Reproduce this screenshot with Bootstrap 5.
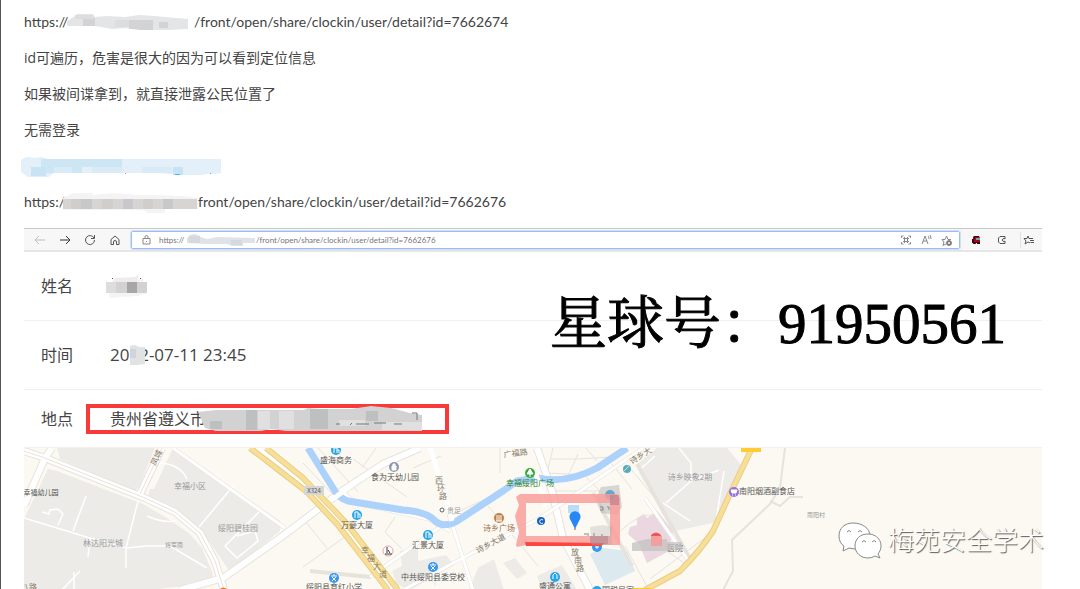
<!DOCTYPE html>
<html lang="zh-CN">
<head>
<meta charset="utf-8">
<meta name="viewport" content="width=device-width, initial-scale=1">
<title>clockin detail</title>
<link href="https://cdn.jsdelivr.net/npm/bootstrap@5.3.0/dist/css/bootstrap.min.css" rel="stylesheet">
<style>
body{font-family:"Open Sans","Noto Sans CJK SC",sans-serif;font-size:14px;line-height:20px;color:#444;background:#fff;overflow-x:hidden}
.page{border-left:1px solid #555;padding:12px 38px 0 23px;height:100vh;overflow:hidden}
.notes{gap:16px;padding-bottom:16px}
.notes p{height:20px;white-space:nowrap}
.url{font-family:Lato,"Open Sans",sans-serif}
.smudge{flex:none;overflow:visible;display:block}
.prefix{width:43px}
.prefix-short{width:39px}
.toolbar{height:24px;background:#f7f7f7;border-top:1px solid #c8c8c8;border-bottom:2px solid #e6e6e9;padding:2px 6px 1px 8px}
.toolset{gap:9px}
.tool{border:0;background:none;padding:0;width:16px;height:16px;display:flex;align-items:center;justify-content:center}
.tool svg,.lock{fill:none;stroke:#555;stroke-width:1;flex:none}
.address{border:1px solid #9dbdf0;outline:1px solid #cfdff8;border-radius:2px;background:#fff;height:18px;padding:0 5px 0 10px;font:8px/16px Lato,"Open Sans",sans-serif;color:#777}
.address input{border:0;padding:0;font:inherit;color:inherit;min-width:0;outline:0;background:none}
.address .tool svg,.lock{stroke:#888}
.scheme{width:28px}
.field{height:69px;border-bottom:1px solid #f0f0f0;padding-left:17px;font-size:16px;line-height:24px}
.field dt{width:69px;font-weight:400;flex:none}
.stamp{font-size:17px}
.place{height:58px}
.place dt{width:45px}
.marked{border:4px solid #f93a3a;width:363px;height:30px;padding-left:20px;line-height:22px;white-space:nowrap}
.planet{right:36px;top:40px;font:57px/64px "Liberation Serif","Noto Serif CJK SC","Noto Sans CJK SC",serif;color:#000;-webkit-text-stroke:1px #000;white-space:nowrap}
.map svg.plan{display:block;width:100%;height:auto}
.plan text{font-family:"Noto Sans CJK SC",sans-serif;font-size:8px;fill:#555;text-anchor:middle}
.plan .pale{fill:#999}
.plan .road{fill:#887a68}
.plan .steps{text-anchor:start}
.plan .tiny{font-size:6px}
.plan .small-label{font-size:7px}
.casing{stroke:#e6e3dd;fill:none}
.lane{stroke:#fff;fill:none}
.watermark{right:-2px;top:71px;gap:6px;font:300 26px/40px "Noto Sans CJK SC",sans-serif;color:#fff;text-shadow:1px 1px 1px #555;white-space:nowrap}
</style>
</head>
<body>
<main class="page">
<section class="notes d-flex flex-column">
<p class="m-0 d-flex url"><span class="prefix">https://</span>
<svg class="smudge" width="127" height="20"><path d="M0 9L8 4 10 2 26 2 28 5 40 4 58 5 72 3 88 4 98 5 121 7 121 17 102 18 70 18 60 16 45 17 28 14 0 14Z" fill="#e4e5e7"/><path d="M16 6h12v8H16zM62 8h10v9H62zM72 8h14v10H72zM92 10h9v6h-9z" fill="#d3d3d6"/><path d="M8 3h18v4H8zM48 8h14v7H48z" fill="#dddddf"/></svg>
<span>/front/open/share/clockin/user/detail?id=7662674</span></p>
<p class="m-0">id可遍历，危害是很大的因为可以看到定位信息</p>
<p class="m-0">如果被间谍拿到，就直接泄露公民位置了</p>
<p class="m-0">无需登录</p>
<p class="m-0"><svg class="smudge" width="200" height="20"><path d="M-3 4Q2-1 10 2L18 1 24 3H197V17L190 18H182L178 19H156L134 17H30L24 21H4L-3 16Z" fill="#e3f0f9"/><path d="M17 3H98V11H58V17H17Z" fill="#cde6f4"/><path d="M7 11H22V20H7zM149 11h10v8h-10z" fill="#c8e3f3"/><path d="M30 11h18v6H30zM68 11h30v6H68zM118 11h30v6h-30z" fill="#d9ebf6"/><path d="M151 18h5v1h-5zM101 17h1v1h-1zM186 17h1v1h-1z" fill="#56afe0"/></svg></p>
<p class="m-0 d-flex url"><span class="prefix-short">https:/</span>
<svg class="smudge" width="135" height="20"><path d="M0 6L10 1H30V3L50 1 75 3 90 3 120 4 135 6V17H102V21H85L80 18 58 18H0Z" fill="#f4f4f4"/><path d="M0 7H134V17H0Z" fill="#d6d5d4"/><path d="M18 7h11v10H18zM60 7h10v10H60zM100 7h10v10h-10z" fill="#c8c8cb"/><path d="M8 7h10v10H8zM39 7h11v10H39zM80 7h10v10H80z" fill="#d1cdcb"/></svg>
<span>front/open/share/clockin/user/detail?id=7662676</span></p>
</section>

<section class="browser">
<div class="toolbar d-flex align-items-center">
<div class="toolset d-flex">
<button class="tool" aria-label="Back"><svg width="12" height="12" opacity=".35"><path d="M11 6H1M5 2L1 6l4 4"/></svg></button>
<button class="tool" aria-label="Forward"><svg width="12" height="12"><path d="M1 6h10M7 2l4 4-4 4" stroke="#333"/></svg></button>
<button class="tool" aria-label="Refresh"><svg width="12" height="12"><path d="M10 4A4.500 4.500 0 1 0 10.500 6M10.500 1v3.500H7"/></svg></button>
<button class="tool" aria-label="Home"><svg width="12" height="12"><path d="M2 5.500L6 2l4 3.500V10.500H7.500V8a1.500 1.500 0 0 0-3 0v2.500H2Z"/></svg></button>
</div>
<div class="address d-flex align-items-center flex-grow-1 mx-2">
<svg class="lock me-2" width="9" height="12"><path d="M1 4.500h7v5.500H1zM3 4.500V3a1.500 1.500 0 0 1 3 0v1.500M4.500 7v1"/></svg>
<span class="scheme">https://</span>
<svg class="smudge" width="69" height="16"><path d="M0 6L3 3Q9 0 14 5L20 7 30 5 68 6V11H56V14H45L40 12H20L0 11Z" fill="#dfe3e8"/><path d="M2 4h11v7H2zM44 8h11v5H44z" fill="#d4d9df"/></svg>
<input class="flex-grow-1" aria-label="Address" value="/front/open/share/clockin/user/detail?id=7662676">
<div class="d-flex gap-1">
<button class="tool" aria-label="Apps"><svg width="10" height="10"><path d="M.5 3V1h2M7.500 1h2v2M.5 7v2h2M7.500 9h2V7M3.500 2v6M6.500 2v6M2 3.500h6M2 6.500h6"/></svg></button>
<button class="tool" aria-label="Read aloud"><svg width="11" height="10"><path d="M1 9L4 1l3 8M2 6h4M7 1q1 1 1 3M9 0q1 2 1 4"/></svg></button>
<button class="tool" aria-label="Favorite"><svg width="11" height="11"><path d="M5 9L2 10.500 3 7 1 4.500h3L5.500 1 7 4.500h3"/><circle cx="8" cy="8" r="2.500" fill="#777"/><path d="M7 8h2M8 7v2" stroke="#fff"/></svg></button>
</div>
</div>
<div class="d-flex align-items-center" style="gap:10px">
<button class="tool" aria-label="Extension"><svg width="10" height="10"><g stroke="none"><path d="M3 1h5l1 2v6H6V8H5v1H2V8H1V4h1V2Z" fill="#b0001c"/><path d="M1 4h2v4H1zM3 1h5v1H4v2H3zM3 7h6v2H6V8H4v1H3z" fill="#260910"/><path d="M5 3h4v2H5z" fill="#70a6ad"/></g></svg></button>
<button class="tool" aria-label="Extensions"><svg width="10" height="10"><path d="M3 1.500h5v2.500a1.500 1.500 0 1 0 0 2v2.500H3L1.500 7V3Z"/></svg></button>
<button class="tool border-start" aria-label="Favorites"><svg width="12" height="10"><path d="M5 1l1 2.500h4M5 1L4 3.500H1L3 6 2 9l3-2 2 1M7 5.500h4M7.500 7.500H11"/></svg></button>
</div>
</div>

<div class="position-relative">
<dl class="m-0">
<div class="field d-flex align-items-center"><dt>姓名</dt><dd class="m-0"><svg class="smudge" width="42" height="24"><path d="M-3 15L18 7 33 5 34 9H37V19L28 22 0 24Z" fill="#f4f4f4"/><path d="M-4 8H37V19H-4Z" fill="#d3d2d2"/><path d="M6 4L25 3 28 1V8H2Z" fill="#eeecec"/><path d="M-4 8H6V19H-4Z" fill="#e0dcda"/><path d="M17 8h10v11H17z" fill="#a8a7a6"/><path d="M2 4h1v1H2zM30 4h1v1h-1z" fill="#555"/></svg></dd></div>
<div class="field d-flex align-items-center"><dt>时间</dt><dd class="m-0 position-relative stamp">2022-07-11 23:45<svg class="smudge position-absolute top-0 start-0" width="40" height="24"><path d="M20 3l5-1 4 2 6 0 0 17-7 1-8 0Z" fill="#e1e2e3"/><path d="M20 6h6v9h-6z" fill="#d2d4d7"/></svg></dd></div>
<div class="field place d-flex align-items-center"><dt>地点</dt><dd class="m-0 marked d-flex">贵州省遵义市<svg class="smudge" width="220" height="22"><path d="M-8 4L10 2H98L102 0 115 1H145L165-2 185 0 204 5 216 7V23H80L65 21 55 23H10L-1 20Z" fill="#d2d2d3"/><path d="M4 13h12v8H4zM40 2h11v20H40zM104 1h18v20h-18zM160 3h12v10h-12z" fill="#bebfc1"/><path d="M52 3h12v18H52zM73 3h15v18H73zM133 12h26v6h-26zM176 14h40v8h-40z" fill="#e0e0e0"/><path d="M130 16h4M146 15l-2 2M150 16h13M168 15h12M188 16h8M206 5h5v7" stroke="#777" fill="none"/></svg></dd></div>
</dl>
<div class="planet position-absolute">星球号：91950561</div>
</div>

<div class="map position-relative">
<svg class="plan" viewBox="24 447 1018 142">
<path fill="#fcf9f2" d="M24 447h1018v142H24z"/>
<g fill="#ecebe7">
<path d="M57 447L60 458 135 490 139 486 155 447ZM48 468L57 470 143 503 167 517 190 533 202 547 213 573 210 582 150 589H24V518ZM173 447L280 520V530L233 568H228L202 530 170 507 148 495 150 488H154Z"/>
<path d="M637 463L657 447H727L742 465 713 522 675 530ZM270 518l10 8-10 9ZM392 570l10-5-2-15 18-4v14l28-6 8 10-42 24-15-4ZM478 567l16-9 10 31h-35ZM537 575l25-11 15 25h-35ZM503 562l12-5 12 15-10 6Z"/>
</g>
<path fill="#dce9ee" d="M590 553l13-6 24 3 8 20-30 14Z"/>
<path fill="#ead7df" d="M637 517l7-4 3 4 10-7 16 20-4 20-22 12-8-19-11-10 2-7 7-2Z"/>
<g class="casing" stroke-width="1">
<path d="M303 462l33 35M318 447l40 44M353 458l54 38M376 447l-14 20M441 455l-28 12M511 486l-64 30M395 516l-10 15 17 17M305 520l22 27M303 566l50-36M435 559v25M488 505l50 60M500 447v25M553 447l-6 25 22 1 9-20M586 447l11 13M550 458h27l35-2M552 490h48l-20-20M612 463l20 25M630 467l25 30M625 545l24 44M620 530q20-18 33-16M667 550l20 14M650 578l60-45"/>
<path d="M785 447l-5 40-10 16-38 36 1 31-10 19M770 500l10 5 10-9h13" stroke-width="2"/>
</g>
<path class="lane" stroke-width="1.500" d="M42 511l7 2 1-4 8-1 5 5-5 11M86 495l-13 35M24 517l66 20-2 19M90 537l37 10 20-2h23l37 22M138 500l-12 47v20M147 515q15 7 28 5M74 589v-18M80 570l-18 19M160 462q20 1 27 16M233 485l-34 41M260 510l-35 35 12 12 21-17-3-10-18 5M679 447l12 15v18l-25 22M691 480l28-11M663 502l27 18M724 470l-8 50M655 455l-20 18"/>
<g stroke-linejoin="round">
<path class="casing" stroke-width="8" d="M24 450L45 457 145 497 175 511 200 532 215 560 224 589M24 505L45 457 52 447M140 493L162 447M180 589L223 577 280 537 342 490 383 463 420 447M537 447L552 490 563 537 590 589"/>
<path class="lane" stroke-width="6" d="M24 450L45 457 145 497 175 511 200 532 215 560 224 589M24 505L45 457 52 447M140 493L162 447M180 589L223 577 280 537 342 490 383 463 420 447M537 447L552 490 563 537 590 589"/>
<path class="casing" stroke-width="1" d="M24 450L45 457 145 497 175 511 200 532 215 560 224 589M140 493L162 447"/>
<path class="casing" stroke-width="4" d="M173 447L285 527M342 490L355 502 428 518 450 530M430 447L447 507 473 589M403 589L457 560 540 517 570 497 643 447M440 526L370 576 310 570M593 492L632 565M645 497L690 562M637 463L690 558"/>
<path class="lane" stroke-width="3" d="M173 447L285 527M342 490L355 502 428 518 450 530M430 447L447 507 473 589M403 589L457 560 540 517 570 497 643 447M440 526L370 576M645 497L690 562"/>
<path d="M308 447L333 487Q338 497 348 500L403 509Q427 511 434 519 443 528 457 520L503 490 517 480 537 477Q567 483 597 467L627 447" fill="none" stroke="#acd2fc" stroke-width="7"/>
<path class="lane" stroke-width="5" d="M428 440L452 520M333 498L357 480M535 470L546 505"/>
</g>
<g fill="none">
<path d="M258 447L307 484 342 523 393 589" stroke="#fff" stroke-width="13"/>
<path d="M250 447L280 470 307 491 337 523 388 589M266 447L303 477 333 508 347 523 398 589M752 447L730 493 713 530Q700 550 680 570L645 589" stroke="#e9cd80" stroke-width="6"/>
<path d="M250 447L280 470 307 491 337 523 388 589M266 447L303 477 333 508 347 523 398 589M752 447L730 493 713 530Q700 550 680 570L645 589" stroke="#f8df99" stroke-width="4"/>
</g>
<path d="M741 447h20v4h-20zM632 587h20v2h-20z" fill="#fc3"/>
<rect x="304" y="485" width="20" height="9" rx="1" fill="#d6d6d6"/>
<text class="tiny" x="314" y="492">X324</text>
<text class="pale" x="190" y="488">幸福小区</text><text class="small-label" x="41" y="494">幸福幼儿园</text>
<text class="pale" x="103" y="545">林达阳光城</text><text class="pale tiny" x="174" y="546">将军南</text><text class="pale" x="238" y="530">绥阳碧桂园</text>
<text class="road" x="159" y="458" transform="rotate(-65 159 458)">凤城</text><text class="road" x="29" y="589">八路</text>
<text x="336" y="462">盛海商务</text><text x="395" y="479">食为天幼儿园</text><text x="357" y="527">万豪大厦</text>
<text class="pale small-label" x="454" y="512">贵足</text><text x="428" y="547">汇景大厦</text><text x="433" y="579">中共绥阳县委党校</text><text x="334" y="589">绥阳县育红小学</text>
<text class="road steps" x="435 437 439" y="482 490 498">西环路</text>
<text class="road steps" x="361 367 373 379" y="552 560 568 576">幸福大道</text>
<text class="road steps" x="571 574 576" y="554 562 570">放南路</text>
<text class="road" x="492" y="545" transform="rotate(-28 492 545)">诗乡大道</text>
<text class="road" x="516" y="455" transform="rotate(-8 516 455)">广福路</text>
<text class="road" x="642" y="457" transform="rotate(-32 642 457)">诗乡大</text>
<text x="530" y="485" style="fill:#27842c">幸福绥阳广场</text><text x="499" y="530" style="fill:#9a7049">诗乡广场</text>
<text x="555" y="588">盛通公寓</text><text x="618" y="592">国税局家</text>
<text class="pale" x="690" y="479">诗乡映象2期</text><text x="767" y="493">南阳烟酒副食店</text><text class="pale tiny" x="816" y="516">南阳村</text>
<text x="675" y="550">医院</text>
<g fill="#27a5e9"><circle cx="336" cy="449" r="5"/><circle cx="357" cy="514" r="5"/><circle cx="428" cy="534" r="5"/><circle cx="555" cy="576" r="5"/><circle cx="610" cy="494" r="5"/><circle cx="597" cy="590" r="5"/></g>
<g fill="#3796ee"><circle cx="433" cy="566" r="5"/><circle cx="334" cy="577" r="5"/><circle cx="597" cy="546" r="5"/></g>
<g stroke="#fff" fill="none"><path d="M334 452v-5h3v5M337 449h2v3M355 517v-6h3v6M358 513h2v4M426 537v-6h3v6M429 533h2v4M553 578v-4l2-2 2 2v4M430 564h6M433 562v2M431 569l4-4M431 565l4 4M331 575h6M334 573v2M332 580l4-4M332 576l4 4M595 546h4M597 544v4"/></g>
<circle cx="394" cy="466" r="5" fill="#8e98b1"/><path d="M392 465h4v4h-4zM393 465v-2h2v2" fill="#fff" stroke="#fff"/>
<circle cx="442" cy="509" r="2" fill="#fff" stroke="#5a6570"/>
<circle cx="499" cy="517" r="5" fill="#bd7f46"/><path d="M496 515h6M497 516v4M499 516v4M501 516v4M496 520h6" stroke="#fff"/>
<circle cx="530" cy="472" r="5" fill="#36ab3b"/><path d="M530 468l3 5h-6zM530 472v4" fill="#fff" stroke="#fff"/>
<circle cx="627" cy="468" r="4" fill="#57acc5"/><path d="M624 470l5-5" stroke="#ebdf80"/>
<circle cx="388" cy="550" r="5" fill="#fff" stroke="#eba6a6"/><path d="M387 546v6M385 553h7M388 549l2 3" stroke="#333" fill="none"/>
<circle cx="734" cy="491" r="5" fill="#9670e7"/><path d="M731 489h6l-1 3h-4zM732 494h1M735 494h1" fill="#fff" stroke="#fff"/>
<path d="M219 589q4-5 9 0Z" fill="#f37421"/>
<path d="M601 486l18-2 3 22-5 8-16-2-4-16Z" fill="#aaa" opacity=".45"/>
<path d="M568 504h11v8h-11z" fill="#bbdcf5"/>
<path d="M516 496l4-3h97l3 4v47h-94l-9 2-1-2 3-13-4-16 4-11Zm10 6v33h84v-33Z" fill="#f99b99" fill-rule="evenodd" opacity=".82"/>
<path d="M525 541l80 1-4 3h-75Z" fill="#ff4540"/>
<path d="M610 494h9v10h-9zM590 535h18v8h-18z" fill="#b9798b" opacity=".6"/>
<path d="M590 526q17-4 22 1v17h-20Z" fill="#aaa" opacity=".3"/>
<path d="M584 533h3M588 535v-3M594 535v-3M602 533v2M600 506h3v3h-3M607 506h2v3" stroke="#888" fill="none"/>
<circle cx="541" cy="520" r="4" fill="#1763bd"/><path d="M543 519a2 2 0 1 0 0 3" fill="none" stroke="#fff"/>
<path d="M575 528l-5-10a5.500 5.500 0 1 1 10 0Z" fill="#2588f4"/><circle cx="575" cy="528" r="1" fill="#a88"/>
<path d="M632 542l15-4h20v3h15v7l-18 2h-32Z" fill="#c4c2c1" opacity=".75"/>
<path d="M651 534q5-5 10 0v2h-10Z" fill="#f15555"/><path d="M651 535h11v10h-11z" fill="#f1a0a0"/>
</svg>
<div class="watermark position-absolute d-flex align-items-center">
<svg width="45" height="40" fill="#fff" stroke="#888"><path d="M16 4C8 4 2 9 2 17c0 5 2 8 5 10l-1 5 6-3q6 2 12 0c6-2 9-6 9-12C33 9 25 4 16 4Z"/><path d="M31 15c-8 0-13 5-13 12s6 12 13 12q4 0 7-2l5 2-2-4c7-9 1-20-10-20Z"/><path d="M10 13q2-3 4 0M21 13q2-3 4 0M25 23q2-3 4 0M35 23q2-3 4 0" fill="none"/></svg>
<span>梅苑安全学术</span>
</div>
</div>
</section>
</main>
<script src="https://cdn.jsdelivr.net/npm/bootstrap@5.3.0/dist/js/bootstrap.bundle.min.js"></script>
</body>
</html>
